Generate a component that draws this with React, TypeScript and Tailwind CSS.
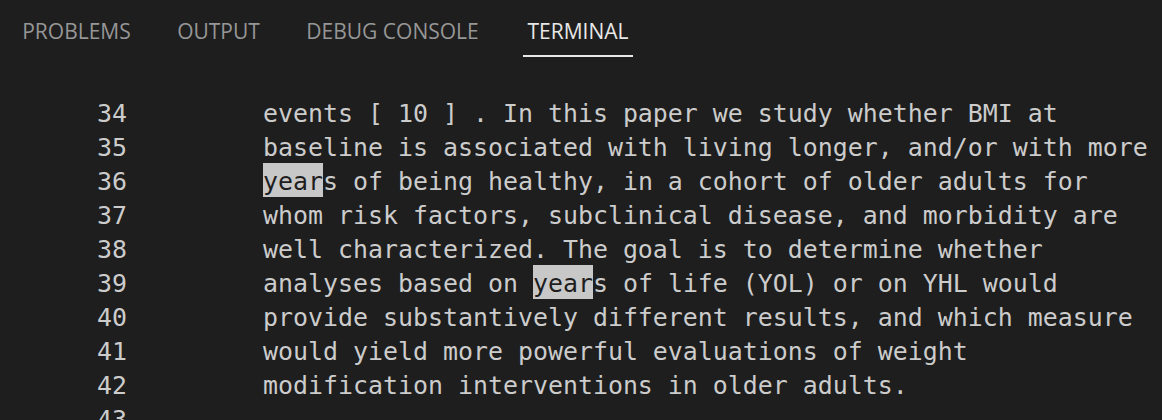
import React from "react";

const lines: { n: number; parts: { t: string; hl?: boolean }[] }[] = [
  { n: 34, parts: [{ t: "events [ 10 ] . In this paper we study whether BMI at" }] },
  { n: 35, parts: [{ t: "baseline is associated with living longer, and/or with more" }] },
  { n: 36, parts: [{ t: "year", hl: true }, { t: "s of being healthy, in a cohort of older adults for" }] },
  { n: 37, parts: [{ t: "whom risk factors, subclinical disease, and morbidity are" }] },
  { n: 38, parts: [{ t: "well characterized. The goal is to determine whether" }] },
  { n: 39, parts: [{ t: "analyses based on " }, { t: "year", hl: true }, { t: "s of life (YOL) or on YHL would" }] },
  { n: 40, parts: [{ t: "provide substantively different results, and which measure" }] },
  { n: 41, parts: [{ t: "would yield more powerful evaluations of weight" }] },
  { n: 42, parts: [{ t: "modification interventions in older adults." }] },
  { n: 43, parts: [{ t: "" }] },
];

const tabs = [
  { label: "PROBLEMS", w: "w-[113px]", active: false },
  { label: "OUTPUT", w: "w-[87px]", active: false },
  { label: "DEBUG CONSOLE", w: "w-[177px]", active: false },
  { label: "TERMINAL", w: "w-[110px]", active: true },
];

export default function App() {
  return (
    <div className="w-[1162px] h-[420px] overflow-hidden bg-[#1e1e1e]">
      <div className="flex h-[57px] pl-[20px] gap-[42px] font-['Open_Sans',sans-serif] text-[21px]">
        {tabs.map((t) => (
          <div
            key={t.label}
            className={
              t.active
                ? `${t.w} h-[57px] box-border pt-[17px] leading-[29px] text-center whitespace-nowrap text-[#e7e7e7] border-b-2 border-[#e7e7e7]`
                : `${t.w} h-[57px] box-border pt-[17px] leading-[29px] text-center whitespace-nowrap text-[#969696]`
            }
          >
            {t.label}
          </div>
        ))}
      </div>
      <div className="pt-[38px] font-['DejaVu_Sans_Mono',monospace] text-[24.92px] text-[#cccccc]">
        {lines.map((l) => (
          <div key={l.n} className="flex h-[34px] leading-[37px] whitespace-pre">
            <div className="w-[30px] ml-[97px] text-right">{l.n}</div>
            <div className="ml-[136px]">
              {l.parts.map((p, i) =>
                p.hl ? (
                  <span key={i} className="inline-block h-[34px] leading-[37px] bg-[#c8c8c8] text-[#1e1e1e] align-top">
                    {p.t}
                  </span>
                ) : (
                  <span key={i}>{p.t}</span>
                )
              )}
            </div>
          </div>
        ))}
      </div>
    </div>
  );
}
